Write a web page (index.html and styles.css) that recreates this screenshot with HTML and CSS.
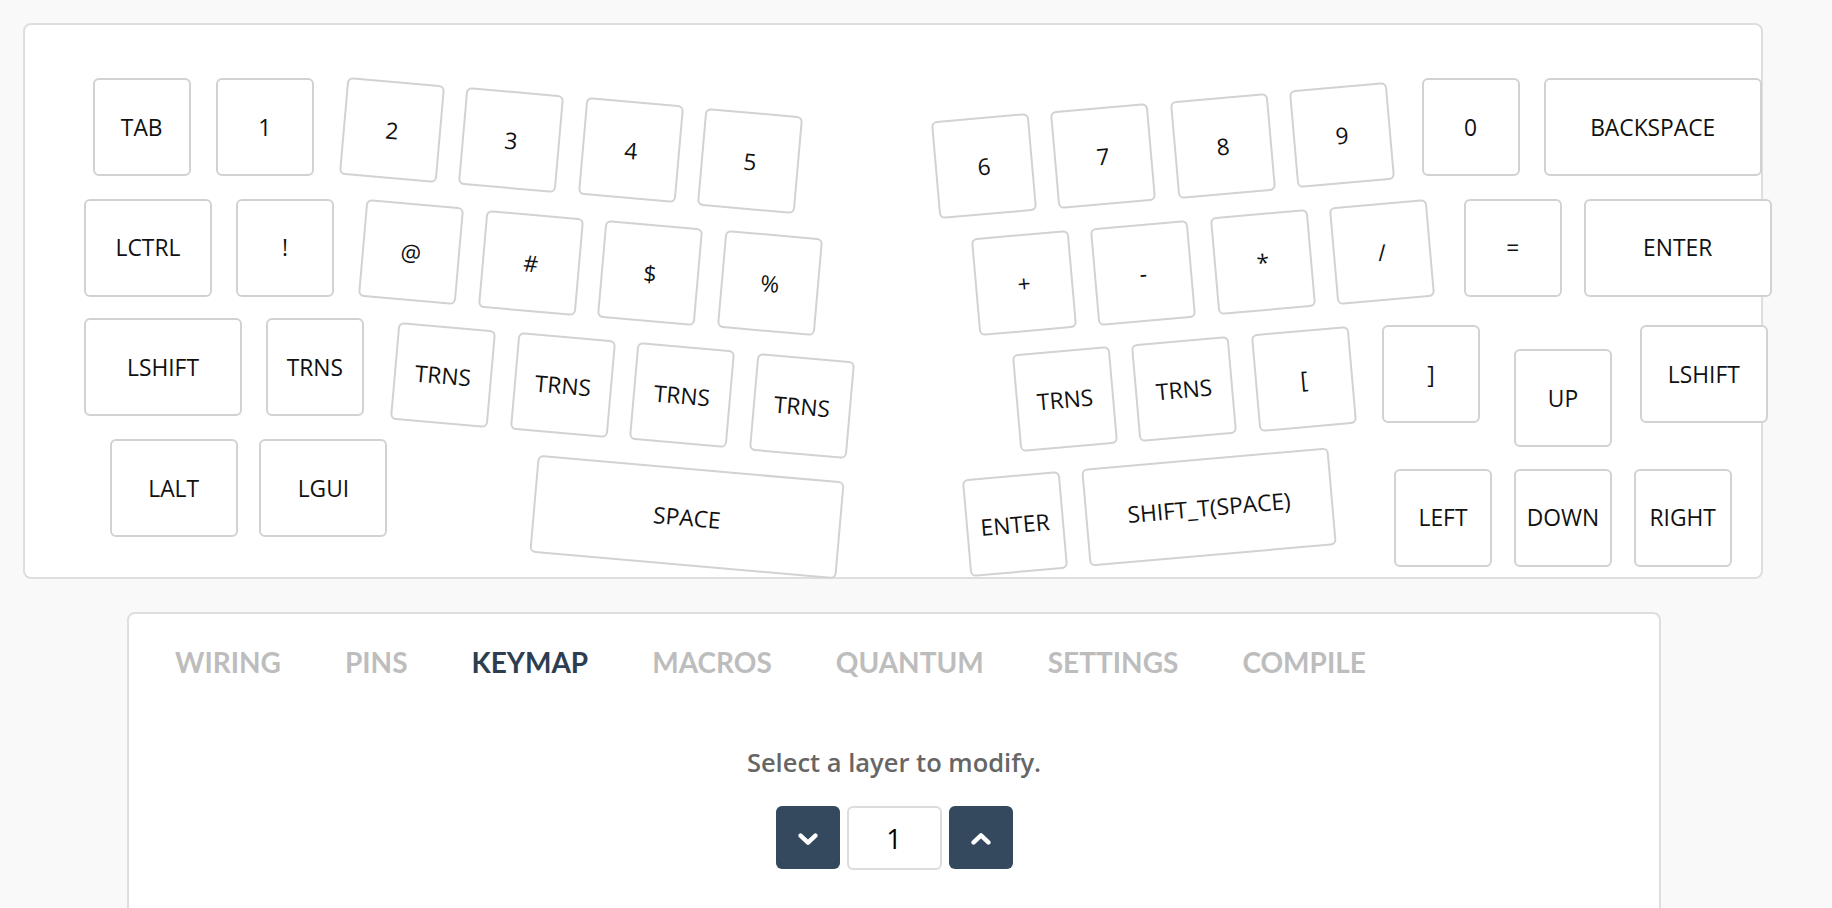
FILE: index.html
```html
<!DOCTYPE html>
<html lang="en">
<head>
<meta charset="utf-8">
<title>Keymap</title>
<link rel="stylesheet" href="styles.css">
</head>
<body>
<div class="page">
  <section class="board">
    <div class="key" style="left:67.7px;top:53.3px">TAB</div>
    <div class="key" style="left:190.7px;top:53.3px">1</div>
    <div class="key rl" style="left:317.8px;top:55.5px">2</div>
    <div class="key rl" style="left:437.3px;top:66px">3</div>
    <div class="key rl" style="left:556.9px;top:76.4px">4</div>
    <div class="key rl" style="left:676.4px;top:86.9px">5</div>

    <div class="key w125" style="left:59px;top:173.6px">LCTRL</div>
    <div class="key" style="left:211px;top:173.6px">!</div>
    <div class="key rl" style="left:337.2px;top:178px">@</div>
    <div class="key rl" style="left:456.8px;top:188.5px">#</div>
    <div class="key rl" style="left:576.3px;top:199px">$</div>
    <div class="key rl" style="left:695.9px;top:209.4px">%</div>

    <div class="key w150" style="left:59px;top:293.4px">LSHIFT</div>
    <div class="key" style="left:240.8px;top:293.4px">TRNS</div>
    <div class="key rl" style="left:369px;top:300.5px">TRNS</div>
    <div class="key rl" style="left:488.5px;top:311px">TRNS</div>
    <div class="key rl" style="left:608px;top:321.4px">TRNS</div>
    <div class="key rl" style="left:727.6px;top:331.9px">TRNS</div>

    <div class="key w125" style="left:84.7px;top:414px">LALT</div>
    <div class="key w125" style="left:234.4px;top:414px">LGUI</div>
    <div class="key rl w275" style="left:507.5px;top:442.6px">SPACE</div>

    <div class="key rr" style="left:909.6px;top:92.4px">6</div>
    <div class="key rr" style="left:1029.1px;top:81.9px">7</div>
    <div class="key rr" style="left:1148.7px;top:71.5px">8</div>
    <div class="key rr" style="left:1268.2px;top:61px">9</div>
    <div class="key" style="left:1396.6px;top:53.3px">0</div>
    <div class="key w200" style="left:1518.7px;top:53.3px">BACKSPACE</div>

    <div class="key rr" style="left:949.5px;top:209.2px">+</div>
    <div class="key rr" style="left:1069px;top:198.7px">-</div>
    <div class="key rr" style="left:1188.6px;top:188.3px">*</div>
    <div class="key rr" style="left:1308.1px;top:177.8px">/</div>
    <div class="key" style="left:1438.8px;top:173.6px">=</div>
    <div class="key w175" style="left:1558.7px;top:173.6px">ENTER</div>

    <div class="key rr" style="left:990.6px;top:325.1px">TRNS</div>
    <div class="key rr" style="left:1110.1px;top:314.6px">TRNS</div>
    <div class="key rr" style="left:1230px;top:305px">[</div>
    <div class="key" style="left:1357px;top:300px">]</div>
    <div class="key" style="left:1489px;top:324px">UP</div>
    <div class="key w125" style="left:1614.8px;top:300px">LSHIFT</div>

    <div class="key rr" style="left:940.7px;top:450px">ENTER</div>
    <div class="key rr w225" style="left:1060.3px;top:433px">SHIFT_T(SPACE)</div>
    <div class="key" style="left:1369px;top:443.5px">LEFT</div>
    <div class="key" style="left:1489px;top:443.5px">DOWN</div>
    <div class="key" style="left:1608.7px;top:443.5px">RIGHT</div>
  </section>

  <section class="panel">
    <nav class="tabs">
      <a class="tab">WIRING</a>
      <a class="tab">PINS</a>
      <a class="tab active">KEYMAP</a>
      <a class="tab">MACROS</a>
      <a class="tab">QUANTUM</a>
      <a class="tab">SETTINGS</a>
      <a class="tab">COMPILE</a>
    </nav>
    <p class="hint">Select a layer to modify.</p>
    <div class="layer">
      <button class="step" type="button" aria-label="Previous layer">
        <svg width="20" height="12" viewBox="0 0 20 12"><polyline points="2.6,2.6 10,9.6 17.4,2.6" fill="none" stroke="#fff" stroke-width="4.4" stroke-linecap="round" stroke-linejoin="round"/></svg>
      </button>
      <div class="layer-value">1</div>
      <button class="step" type="button" aria-label="Next layer">
        <svg width="20" height="12" viewBox="0 0 20 12"><polyline points="2.6,9.4 10,2.4 17.4,9.4" fill="none" stroke="#fff" stroke-width="4.4" stroke-linecap="round" stroke-linejoin="round"/></svg>
      </button>
    </div>
  </section>
</div>
</body>
</html>
```
FILE: styles.css
```css
html, body {
  margin: 0;
  padding: 0;
  background: #f9f9f9;
  overflow: hidden;
}

.page {
  padding: 23px 0 0 23px;
  width: 1740px;
}

.board {
  position: relative;
  box-sizing: border-box;
  width: 1740px;
  height: 556px;
  background: #fff;
  border: 2px solid #dedede;
  border-radius: 8px;
}

.key {
  position: absolute;
  box-sizing: border-box;
  width: 98px;
  height: 98px;
  display: flex;
  align-items: center;
  justify-content: center;
  background: #fff;
  border: 2px solid #d2d2d2;
  border-radius: 6px;
  font-family: "Open Sans", "Noto Sans", sans-serif;
  font-size: 22.8px;
  color: #111;
  white-space: nowrap;
}

.w125 { width: 128px; }
.w150 { width: 158px; }
.w175 { width: 188px; }
.w200 { width: 218px; }
.w225 { width: 248px; }
.w275 { width: 308px; }

.rl { transform: rotate(5deg); }
.rr { transform: rotate(-5deg); }

.panel {
  box-sizing: border-box;
  width: 1534px;
  height: 320px;
  margin: 33px 0 0 104px;
  background: #fff;
  border: 2px solid #dedede;
  border-radius: 8px;
  padding-top: 31px;
}

.tabs {
  display: flex;
  gap: 64px;
  padding-left: 46px;
}

.tab {
  font-family: Lato, "Open Sans", sans-serif;
  font-weight: 700;
  font-size: 28px;
  line-height: 34px;
  color: #bdbdbd;
}

.tab.active {
  color: #2c3e50;
}

.hint {
  margin: 67px 0 0;
  text-align: center;
  font-family: "Open Sans", sans-serif;
  font-weight: 600;
  font-size: 25.5px;
  line-height: 32px;
  color: #666;
}

.layer {
  display: flex;
  justify-content: center;
  gap: 7px;
  margin-top: 28px;
}

.step {
  width: 64px;
  height: 63px;
  padding: 3px 0 0;
  border: 0;
  border-radius: 6px;
  background: #34495e;
  display: flex;
  align-items: center;
  justify-content: center;
}

.layer-value {
  box-sizing: border-box;
  width: 95px;
  height: 64px;
  border: 2px solid #dcdcdc;
  border-radius: 6px;
  display: flex;
  align-items: center;
  justify-content: center;
  font-family: "Open Sans", sans-serif;
  font-size: 27px;
  color: #000;
}
```
